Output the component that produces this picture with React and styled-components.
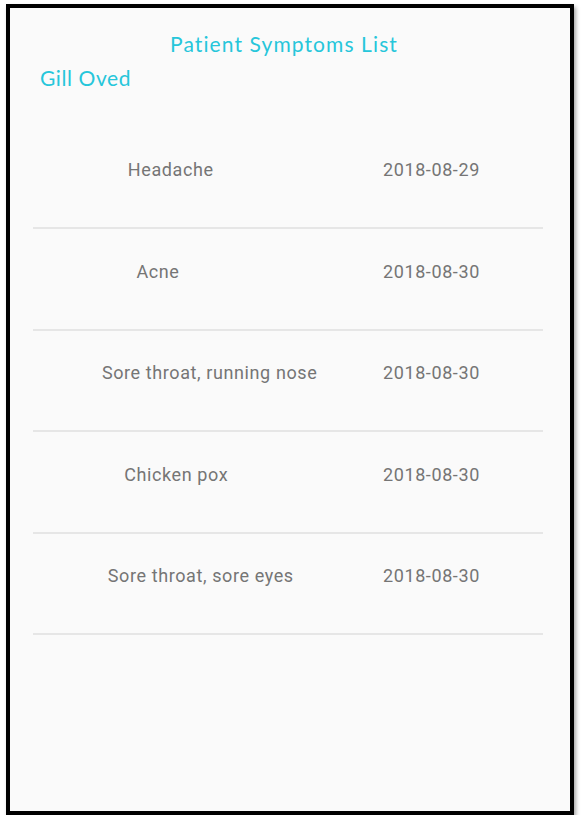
import React from "react";
import styled, { createGlobalStyle } from "styled-components";

const symptoms = [
  { name: "Headache", date: "2018-08-29" },
  { name: "Acne", date: "2018-08-30" },
  { name: "Sore throat, running nose", date: "2018-08-30" },
  { name: "Chicken pox", date: "2018-08-30" },
  { name: "Sore throat, sore eyes", date: "2018-08-30" },
];

const App = () => {
  return (
    <>
      <GlobalStyle />
      <PhoneFrame>
        <Header>
          <PageTitle>Patient Symptoms List</PageTitle>
          <PatientName>Gill Oved</PatientName>
        </Header>

        <SymptomList>
          {symptoms.map((s, i) => (
            <SymptomRow key={i}>
              <SymptomName>
                <span>{s.name}</span>
              </SymptomName>
              <SymptomDate>{s.date}</SymptomDate>
            </SymptomRow>
          ))}
        </SymptomList>
      </PhoneFrame>
    </>
  );
};

export default App;

const GlobalStyle = createGlobalStyle`
  html, body {
    margin: 0;
    padding: 0;
    background: #ffffff;
  }
  * {
    box-sizing: border-box;
  }
`;

const PhoneFrame = styled.div`
  margin: 4px 0 0 6px;
  width: 568px;
  height: 811px;
  border: 4px solid #000;
  background-color: #fafafa;
  box-shadow: 2px 3px 4px rgba(0, 0, 0, 0.35);
  display: flex;
  flex-direction: column;
`;

const Header = styled.header`
  padding: 24px 0 0 30px;
  display: flex;
  flex-direction: column;
  gap: 10px;
`;

const PageTitle = styled.h1`
  margin: 0;
  padding-right: 42px;
  text-align: center;
  font-family: Lato, "Open Sans", sans-serif;
  font-weight: 400;
  font-size: 21px;
  line-height: 24px;
  letter-spacing: 1.1px;
  color: #26c6da;
`;

const PatientName = styled.h2`
  margin: 0;
  font-family: Lato, "Open Sans", sans-serif;
  font-weight: 400;
  font-size: 21px;
  line-height: 24px;
  letter-spacing: 0.6px;
  color: #26c6da;
`;

const SymptomList = styled.div`
  margin: 37.5px 27px 0 23px;
  display: flex;
  flex-direction: column;
`;

const SymptomRow = styled.div`
  height: 101.5px;
  padding: 32.5px 0 0 52.5px;
  border-bottom: 2px solid #e6e6e6;
  display: flex;
  align-items: flex-start;
  font-family: Roboto, "Liberation Sans", sans-serif;
  font-size: 18px;
  line-height: 20px;
  letter-spacing: 0.6px;
  color: #757575;
`;

const SymptomName = styled.div`
  flex: 1;
  display: flex;
  white-space: nowrap;

  &::before {
    content: "";
    flex: 1;
  }
  &::after {
    content: "";
    flex: 4;
  }
`;

const SymptomDate = styled.div`
  width: 160px;
  text-align: left;
`;
